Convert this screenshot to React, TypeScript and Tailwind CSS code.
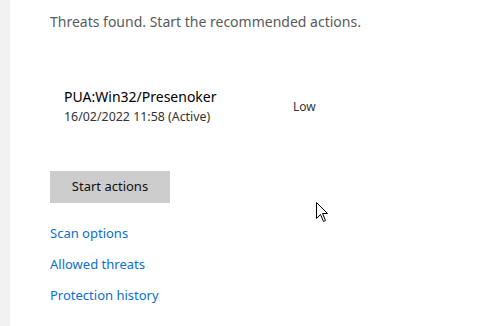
import React from "react";

export default function App() {
  return (
    <div
      className="relative flex h-[326px] w-[503px] overflow-hidden bg-white"
      style={{ fontFamily: '"Noto Sans", "Open Sans", sans-serif' }}
    >
      <div className="h-full w-[10px] bg-[#f2f2f2]" />
      <div className="flex flex-col pl-[40px] pt-[11px]">
        <div className="text-[14px] leading-[22px] text-[#5a5a5a]">
          Threats found. Start the recommended actions.
        </div>
        <div className="mt-[54px] flex pl-[14px]">
          <div className="flex w-[229px] flex-col">
            <div className="text-[14px] leading-[20px] text-[#000000]">PUA:Win32/Presenoker</div>
            <div className="mt-[2px] text-[12.4px] leading-[16px] text-[#333333]">16/02/2022 11:58 (Active)</div>
          </div>
          <div className="pt-[12px] text-[12px] leading-[16px] text-[#333333]">Low</div>
        </div>
        <button className="mt-[46px] h-[32px] w-[120px] bg-[#cccccc] text-[13px] text-[#111111]">
          Start actions
        </button>
        <div className="mt-[20px] flex flex-col gap-[11px] text-[13px] leading-[20px] text-[#0a6fcf]">
          <a>Scan options</a>
          <a>Allowed threats</a>
          <a>Protection history</a>
        </div>
      </div>
      <svg
        className="absolute left-[316px] top-[202px]"
        width="13"
        height="21"
        viewBox="0 0 13 21"
      >
        <path
          d="M0.5 0.5 L0.5 16.5 L4.5 12.5 L7.5 19.5 L9.5 18.5 L6.5 11.5 L11.5 11.5 Z"
          fill="white"
          stroke="black"
          strokeWidth="1"
        />
      </svg>
    </div>
  );
}
